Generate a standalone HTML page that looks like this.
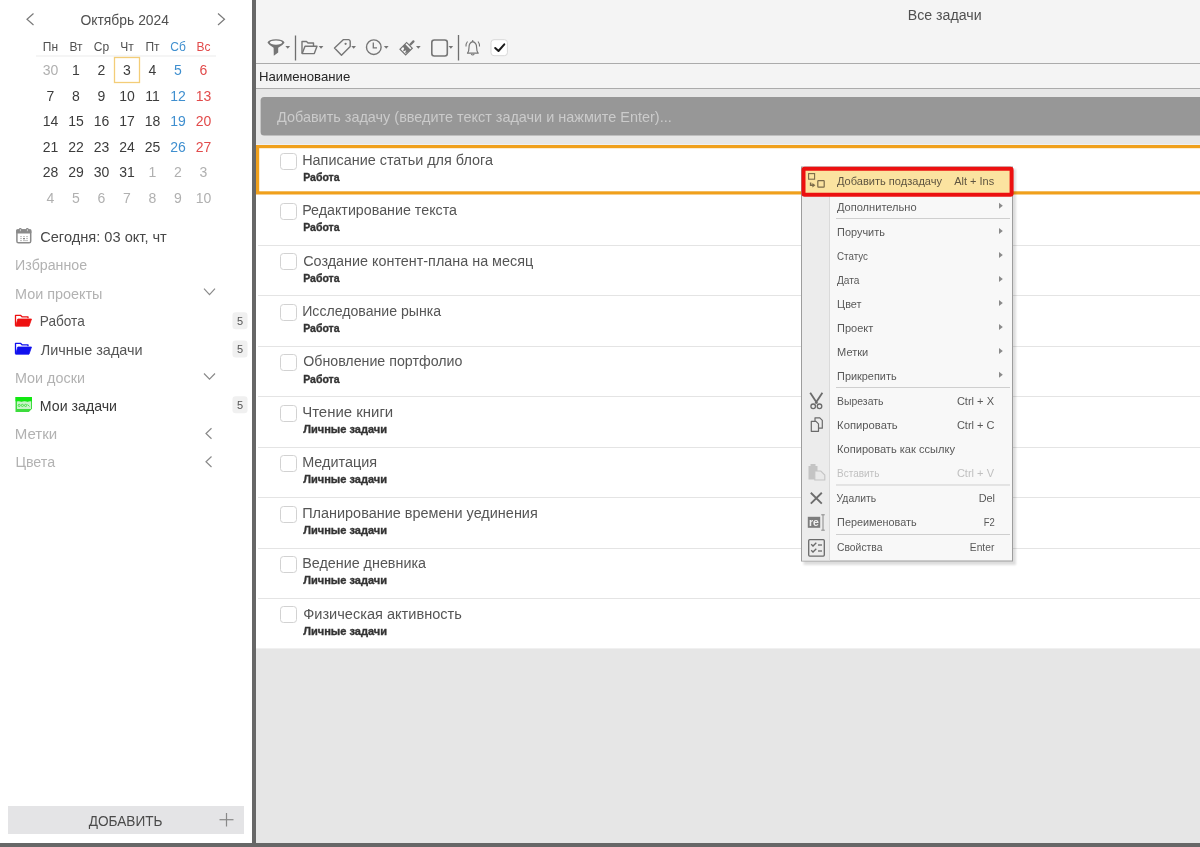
<!DOCTYPE html>
<html lang="ru"><head><meta charset="utf-8"><title>Все задачи</title>
<style>
html,body{margin:0;padding:0;width:1200px;height:847px;overflow:hidden;background:#fff}
svg{display:block;font-family:"Liberation Sans", sans-serif;will-change:transform}
</style></head><body>
<svg width="1200" height="847" viewBox="0 0 1200 847">
<defs><filter id="blur" x="-5%" y="-5%" width="110%" height="110%"><feGaussianBlur stdDeviation="1.3"/></filter></defs>
<rect x="0" y="0" width="252" height="847" fill="#ffffff" stroke="none" stroke-width="1" rx="0"/>
<rect x="256" y="0" width="944" height="88" fill="#f4f4f4" stroke="none" stroke-width="1" rx="0"/>
<line x1="256" y1="63.5" x2="1200" y2="63.5" stroke="#ababab" stroke-width="1"/>
<line x1="256" y1="88.5" x2="1200" y2="88.5" stroke="#ababab" stroke-width="1"/>
<rect x="256" y="89" width="944" height="56" fill="#e7e7e7" stroke="none" stroke-width="1" rx="0"/>
<rect x="260.6" y="97" width="960" height="38.6" fill="#979797" stroke="none" stroke-width="1" rx="3.5"/>
<text x="277.0" y="122" font-size="14.4" fill="#cbcbcb" font-weight="400" text-anchor="start" textLength="394.7" lengthAdjust="spacingAndGlyphs">Добавить задачу (введите текст задачи и нажмите Enter)...</text>
<rect x="256" y="648" width="944" height="195" fill="#e6e6e6" stroke="none" stroke-width="1" rx="0"/>
<rect x="252" y="0" width="4" height="847" fill="#676767" stroke="none" stroke-width="1" rx="0"/>
<rect x="0" y="843" width="1200" height="4" fill="#676767" stroke="none" stroke-width="1" rx="0"/>
<path d="M33.5 13.5 L27 19.2 L33.5 25" fill="none" stroke="#7a7a7a" stroke-width="1.2"/>
<path d="M218 13.5 L224.5 19.2 L218 25" fill="none" stroke="#7a7a7a" stroke-width="1.2"/>
<text x="80.4" y="25" font-size="14" fill="#505050" font-weight="400" text-anchor="start" textLength="88.69" lengthAdjust="spacingAndGlyphs">Октябрь 2024</text>
<text x="50.5" y="51" font-size="12" fill="#505050" font-weight="400" text-anchor="middle">Пн</text>
<text x="76.0" y="51" font-size="12" fill="#505050" font-weight="400" text-anchor="middle">Вт</text>
<text x="101.5" y="51" font-size="12" fill="#505050" font-weight="400" text-anchor="middle">Ср</text>
<text x="127.0" y="51" font-size="12" fill="#505050" font-weight="400" text-anchor="middle">Чт</text>
<text x="152.5" y="51" font-size="12" fill="#505050" font-weight="400" text-anchor="middle">Пт</text>
<text x="178.0" y="51" font-size="12" fill="#3f8fcf" font-weight="400" text-anchor="middle">Сб</text>
<text x="203.5" y="51" font-size="12" fill="#e24b4b" font-weight="400" text-anchor="middle">Вс</text>
<line x1="36" y1="56" x2="216" y2="56" stroke="#ececec" stroke-width="1.2"/>
<rect x="114.5" y="57.5" width="25" height="25" fill="none" stroke="#f3cd78" stroke-width="1.3" rx="0"/>
<text x="50.5" y="75.0" font-size="14" fill="#b0b0b0" font-weight="400" text-anchor="middle">30</text>
<text x="76.0" y="75.0" font-size="14" fill="#3c3c3c" font-weight="400" text-anchor="middle">1</text>
<text x="101.5" y="75.0" font-size="14" fill="#3c3c3c" font-weight="400" text-anchor="middle">2</text>
<text x="127.0" y="75.0" font-size="14" fill="#3c3c3c" font-weight="400" text-anchor="middle">3</text>
<text x="152.5" y="75.0" font-size="14" fill="#3c3c3c" font-weight="400" text-anchor="middle">4</text>
<text x="178.0" y="75.0" font-size="14" fill="#3f8fcf" font-weight="400" text-anchor="middle">5</text>
<text x="203.5" y="75.0" font-size="14" fill="#e24b4b" font-weight="400" text-anchor="middle">6</text>
<text x="50.5" y="100.6" font-size="14" fill="#3c3c3c" font-weight="400" text-anchor="middle">7</text>
<text x="76.0" y="100.6" font-size="14" fill="#3c3c3c" font-weight="400" text-anchor="middle">8</text>
<text x="101.5" y="100.6" font-size="14" fill="#3c3c3c" font-weight="400" text-anchor="middle">9</text>
<text x="127.0" y="100.6" font-size="14" fill="#3c3c3c" font-weight="400" text-anchor="middle">10</text>
<text x="152.5" y="100.6" font-size="14" fill="#3c3c3c" font-weight="400" text-anchor="middle">11</text>
<text x="178.0" y="100.6" font-size="14" fill="#3f8fcf" font-weight="400" text-anchor="middle">12</text>
<text x="203.5" y="100.6" font-size="14" fill="#e24b4b" font-weight="400" text-anchor="middle">13</text>
<text x="50.5" y="126.2" font-size="14" fill="#3c3c3c" font-weight="400" text-anchor="middle">14</text>
<text x="76.0" y="126.2" font-size="14" fill="#3c3c3c" font-weight="400" text-anchor="middle">15</text>
<text x="101.5" y="126.2" font-size="14" fill="#3c3c3c" font-weight="400" text-anchor="middle">16</text>
<text x="127.0" y="126.2" font-size="14" fill="#3c3c3c" font-weight="400" text-anchor="middle">17</text>
<text x="152.5" y="126.2" font-size="14" fill="#3c3c3c" font-weight="400" text-anchor="middle">18</text>
<text x="178.0" y="126.2" font-size="14" fill="#3f8fcf" font-weight="400" text-anchor="middle">19</text>
<text x="203.5" y="126.2" font-size="14" fill="#e24b4b" font-weight="400" text-anchor="middle">20</text>
<text x="50.5" y="151.8" font-size="14" fill="#3c3c3c" font-weight="400" text-anchor="middle">21</text>
<text x="76.0" y="151.8" font-size="14" fill="#3c3c3c" font-weight="400" text-anchor="middle">22</text>
<text x="101.5" y="151.8" font-size="14" fill="#3c3c3c" font-weight="400" text-anchor="middle">23</text>
<text x="127.0" y="151.8" font-size="14" fill="#3c3c3c" font-weight="400" text-anchor="middle">24</text>
<text x="152.5" y="151.8" font-size="14" fill="#3c3c3c" font-weight="400" text-anchor="middle">25</text>
<text x="178.0" y="151.8" font-size="14" fill="#3f8fcf" font-weight="400" text-anchor="middle">26</text>
<text x="203.5" y="151.8" font-size="14" fill="#e24b4b" font-weight="400" text-anchor="middle">27</text>
<text x="50.5" y="177.4" font-size="14" fill="#3c3c3c" font-weight="400" text-anchor="middle">28</text>
<text x="76.0" y="177.4" font-size="14" fill="#3c3c3c" font-weight="400" text-anchor="middle">29</text>
<text x="101.5" y="177.4" font-size="14" fill="#3c3c3c" font-weight="400" text-anchor="middle">30</text>
<text x="127.0" y="177.4" font-size="14" fill="#3c3c3c" font-weight="400" text-anchor="middle">31</text>
<text x="152.5" y="177.4" font-size="14" fill="#b0b0b0" font-weight="400" text-anchor="middle">1</text>
<text x="178.0" y="177.4" font-size="14" fill="#b0b0b0" font-weight="400" text-anchor="middle">2</text>
<text x="203.5" y="177.4" font-size="14" fill="#b0b0b0" font-weight="400" text-anchor="middle">3</text>
<text x="50.5" y="203.0" font-size="14" fill="#b0b0b0" font-weight="400" text-anchor="middle">4</text>
<text x="76.0" y="203.0" font-size="14" fill="#b0b0b0" font-weight="400" text-anchor="middle">5</text>
<text x="101.5" y="203.0" font-size="14" fill="#b0b0b0" font-weight="400" text-anchor="middle">6</text>
<text x="127.0" y="203.0" font-size="14" fill="#b0b0b0" font-weight="400" text-anchor="middle">7</text>
<text x="152.5" y="203.0" font-size="14" fill="#b0b0b0" font-weight="400" text-anchor="middle">8</text>
<text x="178.0" y="203.0" font-size="14" fill="#b0b0b0" font-weight="400" text-anchor="middle">9</text>
<text x="203.5" y="203.0" font-size="14" fill="#b0b0b0" font-weight="400" text-anchor="middle">10</text>
<rect x="16.9" y="229.9" width="13.8" height="12.9" rx="1.6" fill="#fff" stroke="#8a8a8a" stroke-width="1.5"/><rect x="16.2" y="229.2" width="15.2" height="4.3" rx="1.2" fill="#8a8a8a"/><rect x="19" y="228" width="2.6" height="3.6" rx="1" fill="#8a8a8a"/><rect x="26" y="228" width="2.6" height="3.6" rx="1" fill="#8a8a8a"/><rect x="19.9" y="229.2" width="0.9" height="2" fill="#d8d8d8"/><rect x="26.9" y="229.2" width="0.9" height="2" fill="#d8d8d8"/><g fill="#b8b8b8"><rect x="20" y="236.2" width="2" height="0.9"/><rect x="23" y="236.2" width="2" height="0.9"/><rect x="26" y="236.2" width="2" height="0.9"/><rect x="20" y="238.2" width="2" height="0.9"/><rect x="23" y="238" width="2" height="1.3" fill="#888"/><rect x="26" y="238.2" width="2" height="0.9"/><rect x="20" y="240.2" width="2" height="0.9"/><rect x="23" y="240.2" width="5" height="0.9"/></g>
<text x="40.2" y="242" font-size="14.4" fill="#484848" font-weight="400" text-anchor="start" textLength="126.63" lengthAdjust="spacingAndGlyphs">Сегодня: 03 окт, чт</text>
<text x="15.1" y="270" font-size="14.25" fill="#b2b2b2" font-weight="400" text-anchor="start" textLength="72.02" lengthAdjust="spacingAndGlyphs">Избранное</text>
<text x="14.99" y="298.6" font-size="14.25" fill="#b2b2b2" font-weight="400" text-anchor="start" textLength="87.46" lengthAdjust="spacingAndGlyphs">Мои проекты</text>
<path d="M204 288.7 L209.5 294.6 L215 288.7" fill="none" stroke="#8a8a8a" stroke-width="1.2"/>
<path d="M15.5 325.8 L15.5 315.3 L20.5 315.3 L22 316.8 L28 316.8 L28 318.3" fill="none" stroke="#ee1010" stroke-width="1.3" stroke-linejoin="round"/>
<path d="M17.8 319.0 L31.5 319.0 L29 326.2 L15.6 326.2 Z" fill="#ee1010" stroke="#ee1010" stroke-width="0.8" stroke-linejoin="round"/>
<text x="39.85" y="326.3" font-size="14.4" fill="#555" font-weight="400" text-anchor="start" textLength="44.95" lengthAdjust="spacingAndGlyphs">Работа</text>
<path d="M15.5 353.8 L15.5 343.3 L20.5 343.3 L22 344.8 L28 344.8 L28 346.3" fill="none" stroke="#1010ee" stroke-width="1.3" stroke-linejoin="round"/>
<path d="M17.8 347.0 L31.5 347.0 L29 354.2 L15.6 354.2 Z" fill="#1010ee" stroke="#1010ee" stroke-width="0.8" stroke-linejoin="round"/>
<text x="40.8" y="354.6" font-size="14.4" fill="#555" font-weight="400" text-anchor="start" textLength="101.84" lengthAdjust="spacingAndGlyphs">Личные задачи</text>
<rect x="232.5" y="312.2" width="15" height="17" fill="#f0f0f0" stroke="none" stroke-width="1" rx="3"/>
<text x="240" y="324.5" font-size="11" fill="#555" font-weight="400" text-anchor="middle">5</text>
<rect x="232.5" y="340.4" width="15" height="17" fill="#f0f0f0" stroke="none" stroke-width="1" rx="3"/>
<text x="240" y="352.7" font-size="11" fill="#555" font-weight="400" text-anchor="middle">5</text>
<text x="14.99" y="382.7" font-size="14.25" fill="#b2b2b2" font-weight="400" text-anchor="start" textLength="69.98" lengthAdjust="spacingAndGlyphs">Мои доски</text>
<path d="M204 373.5 L209.5 379.2 L215 373.5" fill="none" stroke="#8a8a8a" stroke-width="1.2"/>
<path d="M15.5 397 L32 397 L32 408.8 L28.8 412 L15.5 412 Z" fill="#3ddc3d"/><rect x="15.5" y="397" width="16.5" height="4.2" fill="#12e812"/><path d="M17 401.6 Q18.5 400.8 20 401.6 T23 401.6 T26 401.6 T29 401.6 T31 401.6 L31 409 L17 409 Z" fill="#c9f3c9"/><g fill="none" stroke="#3ddc3d" stroke-width="0.9"><circle cx="19.2" cy="405.4" r="1.1"/><circle cx="22.4" cy="405.4" r="1.1"/><circle cx="25.6" cy="405.4" r="1.1"/><path d="M27.5 404.5 L29.5 406.5"/></g>
<text x="39.82" y="410.7" font-size="14.4" fill="#383838" font-weight="400" text-anchor="start" textLength="77.22" lengthAdjust="spacingAndGlyphs">Мои задачи</text>
<rect x="232.5" y="396.2" width="15" height="17" fill="#f0f0f0" stroke="none" stroke-width="1" rx="3"/>
<text x="240" y="408.5" font-size="11" fill="#555" font-weight="400" text-anchor="middle">5</text>
<text x="14.74" y="439.4" font-size="14.25" fill="#b2b2b2" font-weight="400" text-anchor="start" textLength="42.47" lengthAdjust="spacingAndGlyphs">Метки</text>
<path d="M211.5 428.2 L206 433.5 L211.5 438.8" fill="none" stroke="#8a8a8a" stroke-width="1.2"/>
<text x="15.4" y="467.2" font-size="14.25" fill="#b2b2b2" font-weight="400" text-anchor="start" textLength="39.73" lengthAdjust="spacingAndGlyphs">Цвета</text>
<path d="M211.5 456.5 L206 461.8 L211.5 467" fill="none" stroke="#8a8a8a" stroke-width="1.2"/>
<rect x="8" y="806" width="236" height="28" fill="#e4e4e6" stroke="none" stroke-width="1" rx="0"/>
<text x="88.7" y="825.8" font-size="14.5" fill="#4a4a4a" font-weight="400" text-anchor="start" textLength="73.79" lengthAdjust="spacingAndGlyphs">ДОБАВИТЬ</text>
<line x1="219.5" y1="819.7" x2="233.5" y2="819.7" stroke="#888" stroke-width="1.2"/>
<line x1="226.5" y1="813" x2="226.5" y2="826.5" stroke="#888" stroke-width="1.2"/>
<text x="907.74" y="20.4" font-size="14" fill="#505050" font-weight="400" text-anchor="start" textLength="73.89" lengthAdjust="spacingAndGlyphs">Все задачи</text>
<path d="M267.5 42.8 A8.5 3.6 0 0 1 284.5 42.8 Q283 45.2 278.2 47.8 L278.2 52.4 L273.8 55.7 L273.6 47.8 Q269 45.2 267.5 42.8 Z" fill="#757575" stroke="none" stroke-width="1"/>
<ellipse cx="276" cy="42.6" rx="6.2" ry="2.1" fill="#f9f9f9"/>
<path d="M285.4 46.0 L290.09999999999997 46.0 L287.75 48.7 Z" fill="#757575" stroke="none" stroke-width="1"/>
<line x1="295.5" y1="35.5" x2="295.5" y2="60.5" stroke="#6f6f6f" stroke-width="1.3"/>
<path d="M302 53.5 L302 41.5 L306.5 41.5 L308 43 L313.5 43 L313.5 46" fill="none" stroke="#757575" stroke-width="1.4" stroke-linejoin="round"/>
<path d="M302.2 53.6 L305 46.3 L317 46.3 L314.3 53.6 Z" fill="none" stroke="#757575" stroke-width="1.4" stroke-linejoin="round"/>
<path d="M318.7 46.0 L323.4 46.0 L321.05 48.7 Z" fill="#757575" stroke="none" stroke-width="1"/>
<path d="M334.5 48 L343.5 39.6 L348.8 39.6 Q350.2 40 350.2 41.5 L350.2 46.5 L341.5 55.3 Z" fill="none" stroke="#757575" stroke-width="1.4" stroke-linejoin="round"/>
<circle cx="345.6" cy="43.8" r="1.1" fill="#757575"/>
<path d="M351.3 46.0 L356.0 46.0 L353.65000000000003 48.7 Z" fill="#757575" stroke="none" stroke-width="1"/>
<circle cx="373.8" cy="47.2" r="7.3" fill="none" stroke="#757575" stroke-width="1.4"/>
<path d="M373.3 42.6 L373.3 47.9 L377 47.9" fill="none" stroke="#757575" stroke-width="1.3"/>
<path d="M383.9 46.0 L388.59999999999997 46.0 L386.25 48.7 Z" fill="#757575" stroke="none" stroke-width="1"/>
<g transform="translate(406.2 48.6) rotate(45)"><rect x="-1.1" y="-11.3" width="2.3" height="6.5" rx="1.1" fill="#757575"/><rect x="-4" y="-4.6" width="8" height="9.4" fill="#fafafa" stroke="#757575" stroke-width="1.2"/><path d="M-4 -2.4 L4 -2.4 L4 0.8 L2.6 4.4 L1.2 1.2 L-0.3 4.4 L-1.6 1.2 L-4 1.2 Z" fill="#757575"/></g>
<path d="M416.0 46.0 L420.7 46.0 L418.35 48.7 Z" fill="#757575" stroke="none" stroke-width="1"/>
<rect x="431.8" y="40" width="15.5" height="16" fill="none" stroke="#757575" stroke-width="1.6" rx="2.5"/>
<path d="M448.5 46.0 L453.2 46.0 L450.85 48.7 Z" fill="#757575" stroke="none" stroke-width="1"/>
<line x1="458.5" y1="35" x2="458.5" y2="60.5" stroke="#6f6f6f" stroke-width="1.3"/>
<path d="M467.5 53.2 Q469 51.5 469 47.5 Q469 42.5 472.7 41.6 Q476.6 42.5 476.6 47.5 Q476.6 51.5 478.2 53.2 Z" fill="none" stroke="#757575" stroke-width="1.2" stroke-linejoin="round"/>
<path d="M471.2 54 Q472.7 56 474.3 54" fill="none" stroke="#757575" stroke-width="1.1"/>
<line x1="472.7" y1="40" x2="472.7" y2="41.6" stroke="#757575" stroke-width="1.1"/>
<path d="M467.5 41.5 Q465.8 43.5 466 46.5" fill="none" stroke="#757575" stroke-width="1.1"/>
<path d="M478 41.5 Q479.7 43.5 479.5 46.5" fill="none" stroke="#757575" stroke-width="1.1"/>
<rect x="491" y="39.7" width="16.4" height="16" fill="#ffffff" stroke="#d8d8d8" stroke-width="1" rx="3"/>
<path d="M495.2 48 L498.5 51 L504.3 44.3" fill="none" stroke="#1a1a1a" stroke-width="2.0" stroke-linecap="round" stroke-linejoin="round"/>
<text x="258.99" y="81" font-size="13" fill="#262626" font-weight="400" text-anchor="start" textLength="91.25" lengthAdjust="spacingAndGlyphs">Наименование</text>
<rect x="256" y="144.6" width="944" height="503.8" fill="#ffffff" stroke="none" stroke-width="1" rx="0"/>
<rect x="280.5" y="153.5" width="16" height="16" fill="#fff" stroke="#d2d2d2" stroke-width="1" rx="3"/>
<text x="302.2" y="164.7" font-size="14.35" fill="#555" font-weight="400" text-anchor="start" textLength="190.78" lengthAdjust="spacingAndGlyphs">Написание статьи для блога</text>
<text x="303.2" y="180.89999999999998" font-size="10.5" fill="#333" font-weight="700" text-anchor="start" textLength="36.34" lengthAdjust="spacingAndGlyphs" stroke="#333" stroke-width="0.35">Работа</text>
<line x1="258" y1="245.5" x2="1200" y2="245.5" stroke="#e4e4e4" stroke-width="1"/>
<rect x="280.5" y="203.5" width="16" height="16" fill="#fff" stroke="#d2d2d2" stroke-width="1" rx="3"/>
<text x="302.21" y="215.13" font-size="14.35" fill="#555" font-weight="400" text-anchor="start" textLength="154.77" lengthAdjust="spacingAndGlyphs">Редактирование текста</text>
<text x="303.2" y="231.32999999999998" font-size="10.5" fill="#333" font-weight="700" text-anchor="start" textLength="36.34" lengthAdjust="spacingAndGlyphs" stroke="#333" stroke-width="0.35">Работа</text>
<line x1="258" y1="295.5" x2="1200" y2="295.5" stroke="#e4e4e4" stroke-width="1"/>
<rect x="280.5" y="253.5" width="16" height="16" fill="#fff" stroke="#d2d2d2" stroke-width="1" rx="3"/>
<text x="303.2" y="265.56" font-size="14.35" fill="#555" font-weight="400" text-anchor="start" textLength="230.02" lengthAdjust="spacingAndGlyphs">Создание контент-плана на месяц</text>
<text x="303.2" y="281.76" font-size="10.5" fill="#333" font-weight="700" text-anchor="start" textLength="36.34" lengthAdjust="spacingAndGlyphs" stroke="#333" stroke-width="0.35">Работа</text>
<line x1="258" y1="346.5" x2="1200" y2="346.5" stroke="#e4e4e4" stroke-width="1"/>
<rect x="280.5" y="304.5" width="16" height="16" fill="#fff" stroke="#d2d2d2" stroke-width="1" rx="3"/>
<text x="302.22" y="315.99" font-size="14.35" fill="#555" font-weight="400" text-anchor="start" textLength="138.86" lengthAdjust="spacingAndGlyphs">Исследование рынка</text>
<text x="303.2" y="332.19" font-size="10.5" fill="#333" font-weight="700" text-anchor="start" textLength="36.34" lengthAdjust="spacingAndGlyphs" stroke="#333" stroke-width="0.35">Работа</text>
<line x1="258" y1="396.5" x2="1200" y2="396.5" stroke="#e4e4e4" stroke-width="1"/>
<rect x="280.5" y="354.5" width="16" height="16" fill="#fff" stroke="#d2d2d2" stroke-width="1" rx="3"/>
<text x="303.2" y="366.42" font-size="14.35" fill="#555" font-weight="400" text-anchor="start" textLength="159.18" lengthAdjust="spacingAndGlyphs">Обновление портфолио</text>
<text x="303.2" y="382.62" font-size="10.5" fill="#333" font-weight="700" text-anchor="start" textLength="36.34" lengthAdjust="spacingAndGlyphs" stroke="#333" stroke-width="0.35">Работа</text>
<line x1="258" y1="447.5" x2="1200" y2="447.5" stroke="#e4e4e4" stroke-width="1"/>
<rect x="280.5" y="405.5" width="16" height="16" fill="#fff" stroke="#d2d2d2" stroke-width="1" rx="3"/>
<text x="302.16" y="416.85" font-size="14.35" fill="#555" font-weight="400" text-anchor="start" textLength="91.06" lengthAdjust="spacingAndGlyphs">Чтение книги</text>
<text x="303.2" y="433.05" font-size="10.5" fill="#333" font-weight="700" text-anchor="start" textLength="83.88" lengthAdjust="spacingAndGlyphs" stroke="#333" stroke-width="0.35">Личные задачи</text>
<line x1="258" y1="497.5" x2="1200" y2="497.5" stroke="#e4e4e4" stroke-width="1"/>
<rect x="280.5" y="455.5" width="16" height="16" fill="#fff" stroke="#d2d2d2" stroke-width="1" rx="3"/>
<text x="302.2" y="467.28" font-size="14.35" fill="#555" font-weight="400" text-anchor="start" textLength="74.88" lengthAdjust="spacingAndGlyphs">Медитация</text>
<text x="303.2" y="483.47999999999996" font-size="10.5" fill="#333" font-weight="700" text-anchor="start" textLength="83.88" lengthAdjust="spacingAndGlyphs" stroke="#333" stroke-width="0.35">Личные задачи</text>
<line x1="258" y1="548.5" x2="1200" y2="548.5" stroke="#e4e4e4" stroke-width="1"/>
<rect x="280.5" y="506.5" width="16" height="16" fill="#fff" stroke="#d2d2d2" stroke-width="1" rx="3"/>
<text x="302.19" y="517.71" font-size="14.35" fill="#555" font-weight="400" text-anchor="start" textLength="235.58" lengthAdjust="spacingAndGlyphs">Планирование времени уединения</text>
<text x="303.2" y="533.91" font-size="10.5" fill="#333" font-weight="700" text-anchor="start" textLength="83.88" lengthAdjust="spacingAndGlyphs" stroke="#333" stroke-width="0.35">Личные задачи</text>
<line x1="258" y1="598.5" x2="1200" y2="598.5" stroke="#e4e4e4" stroke-width="1"/>
<rect x="280.5" y="556.5" width="16" height="16" fill="#fff" stroke="#d2d2d2" stroke-width="1" rx="3"/>
<text x="302.2" y="568.14" font-size="14.35" fill="#555" font-weight="400" text-anchor="start" textLength="123.78" lengthAdjust="spacingAndGlyphs">Ведение дневника</text>
<text x="303.2" y="584.3399999999999" font-size="10.5" fill="#333" font-weight="700" text-anchor="start" textLength="83.88" lengthAdjust="spacingAndGlyphs" stroke="#333" stroke-width="0.35">Личные задачи</text>
<rect x="280.5" y="606.5" width="16" height="16" fill="#fff" stroke="#d2d2d2" stroke-width="1" rx="3"/>
<text x="303.2" y="618.57" font-size="14.35" fill="#555" font-weight="400" text-anchor="start" textLength="158.68" lengthAdjust="spacingAndGlyphs">Физическая активность</text>
<text x="303.2" y="634.77" font-size="10.5" fill="#333" font-weight="700" text-anchor="start" textLength="83.88" lengthAdjust="spacingAndGlyphs" stroke="#333" stroke-width="0.35">Личные задачи</text>
<rect x="257.6" y="146.6" width="960" height="46.3" fill="none" stroke="#f0a01c" stroke-width="3.2" rx="0"/>
<rect x="803.5" y="169" width="212.5" height="396" fill="#000" opacity="0.13" filter="url(#blur)"/>
<rect x="801.5" y="167" width="211.0" height="394" fill="#f8f8f8" stroke="#9d9d9d" stroke-width="1" rx="0"/>
<rect x="802.0" y="167.5" width="28" height="393" fill="#ececec" stroke="none" stroke-width="1" rx="0"/>
<line x1="829.5" y1="167" x2="829.5" y2="560.5" stroke="#dadada" stroke-width="1"/>
<rect x="803.5" y="168.7" width="208.1" height="26.1" fill="#fbe3a0" stroke="#ec1010" stroke-width="4" rx="1.2"/>
<line x1="836" y1="218.5" x2="1010" y2="218.5" stroke="#cfcfcf" stroke-width="1"/>
<line x1="836" y1="387.5" x2="1010" y2="387.5" stroke="#cfcfcf" stroke-width="1"/>
<line x1="836" y1="485" x2="1010" y2="485" stroke="#cfcfcf" stroke-width="1"/>
<line x1="836" y1="534.5" x2="1010" y2="534.5" stroke="#cfcfcf" stroke-width="1"/>
<text x="836.9" y="185.1" font-size="11.1" fill="#5e5440" font-weight="400" text-anchor="start" textLength="105.15" lengthAdjust="spacingAndGlyphs">Добавить подзадачу</text>
<text x="954.2" y="185.1" font-size="11.1" fill="#5e5440" font-weight="400" text-anchor="start" textLength="39.95" lengthAdjust="spacingAndGlyphs">Alt + Ins</text>
<text x="836.9" y="210.7" font-size="11.1" fill="#585858" font-weight="400" text-anchor="start" textLength="79.77" lengthAdjust="spacingAndGlyphs">Дополнительно</text>
<path d="M999 202.7 L1002.8 205.7 L999 208.7 Z" fill="#8a8a8a" stroke="none" stroke-width="1"/>
<text x="837.1" y="236" font-size="11.1" fill="#585858" font-weight="400" text-anchor="start" textLength="47.78" lengthAdjust="spacingAndGlyphs">Поручить</text>
<path d="M999 228 L1002.8 231 L999 234 Z" fill="#8a8a8a" stroke="none" stroke-width="1"/>
<text x="837.0" y="260" font-size="11.1" fill="#585858" font-weight="400" text-anchor="start" textLength="30.9" lengthAdjust="spacingAndGlyphs">Статус</text>
<path d="M999 252 L1002.8 255 L999 258 Z" fill="#8a8a8a" stroke="none" stroke-width="1"/>
<text x="836.9" y="284" font-size="11.1" fill="#585858" font-weight="400" text-anchor="start" textLength="22.54" lengthAdjust="spacingAndGlyphs">Дата</text>
<path d="M999 276 L1002.8 279 L999 282 Z" fill="#8a8a8a" stroke="none" stroke-width="1"/>
<text x="837.1" y="308" font-size="11.1" fill="#585858" font-weight="400" text-anchor="start" textLength="24.38" lengthAdjust="spacingAndGlyphs">Цвет</text>
<path d="M999 300 L1002.8 303 L999 306 Z" fill="#8a8a8a" stroke="none" stroke-width="1"/>
<text x="837.1" y="332" font-size="11.1" fill="#585858" font-weight="400" text-anchor="start" textLength="36.18" lengthAdjust="spacingAndGlyphs">Проект</text>
<path d="M999 324 L1002.8 327 L999 330 Z" fill="#8a8a8a" stroke="none" stroke-width="1"/>
<text x="837.1" y="356" font-size="11.1" fill="#585858" font-weight="400" text-anchor="start" textLength="31.2" lengthAdjust="spacingAndGlyphs">Метки</text>
<path d="M999 348 L1002.8 351 L999 354 Z" fill="#8a8a8a" stroke="none" stroke-width="1"/>
<text x="837.1" y="379.8" font-size="11.1" fill="#585858" font-weight="400" text-anchor="start" textLength="59.48" lengthAdjust="spacingAndGlyphs">Прикрепить</text>
<path d="M999 371.8 L1002.8 374.8 L999 377.8 Z" fill="#8a8a8a" stroke="none" stroke-width="1"/>
<text x="837.1" y="404.6" font-size="11.1" fill="#585858" font-weight="400" text-anchor="start" textLength="46.29" lengthAdjust="spacingAndGlyphs">Вырезать</text>
<text x="956.9" y="404.6" font-size="11.1" fill="#585858" font-weight="400" text-anchor="start" textLength="37.1" lengthAdjust="spacingAndGlyphs">Ctrl + X</text>
<text x="837.1" y="428.6" font-size="11.1" fill="#585858" font-weight="400" text-anchor="start" textLength="60.58" lengthAdjust="spacingAndGlyphs">Копировать</text>
<text x="956.9" y="428.6" font-size="11.1" fill="#585858" font-weight="400" text-anchor="start" textLength="37.71" lengthAdjust="spacingAndGlyphs">Ctrl + C</text>
<text x="837.1" y="452.5" font-size="11.1" fill="#585858" font-weight="400" text-anchor="start" textLength="117.85" lengthAdjust="spacingAndGlyphs">Копировать как ссылку</text>
<text x="837.1" y="476.5" font-size="11.1" fill="#c0c0c0" font-weight="400" text-anchor="start" textLength="42.3" lengthAdjust="spacingAndGlyphs">Вставить</text>
<text x="956.9" y="476.5" font-size="11.1" fill="#c0c0c0" font-weight="400" text-anchor="start" textLength="37.1" lengthAdjust="spacingAndGlyphs">Ctrl + V</text>
<text x="836.6" y="502.3" font-size="11.1" fill="#585858" font-weight="400" text-anchor="start" textLength="39.49" lengthAdjust="spacingAndGlyphs">Удалить</text>
<text x="978.7" y="502.3" font-size="11.1" fill="#585858" font-weight="400" text-anchor="start" textLength="16.36" lengthAdjust="spacingAndGlyphs">Del</text>
<text x="837.1" y="526.4" font-size="11.1" fill="#585858" font-weight="400" text-anchor="start" textLength="79.58" lengthAdjust="spacingAndGlyphs">Переименовать</text>
<text x="983.7" y="526.4" font-size="11.1" fill="#585858" font-weight="400" text-anchor="start" textLength="11.04" lengthAdjust="spacingAndGlyphs">F2</text>
<text x="837.0" y="551.2" font-size="11.1" fill="#585858" font-weight="400" text-anchor="start" textLength="45.43" lengthAdjust="spacingAndGlyphs">Свойства</text>
<text x="969.8" y="551.2" font-size="11.1" fill="#585858" font-weight="400" text-anchor="start" textLength="24.52" lengthAdjust="spacingAndGlyphs">Enter</text>
<rect x="808.6" y="173.6" width="6" height="5.6" fill="none" stroke="#7a6a48" stroke-width="1.1" rx="0"/>
<rect x="817.8" y="180.7" width="6.4" height="6.4" fill="none" stroke="#7a6a48" stroke-width="1.2" rx="0.6"/>
<path d="M810.6 182.6 L810.6 185.2 L813 185.2" fill="none" stroke="#7a6a48" stroke-width="1.5"/>
<path d="M812.4 183 L815.4 185.2 L812.4 187.4 Z" fill="#7a6a48" stroke="none" stroke-width="1"/>
<path d="M810.2 392.8 L817.3 403.6" fill="none" stroke="#6a6a6a" stroke-width="1.8"/>
<path d="M822.4 392.8 L815.3 403.6" fill="none" stroke="#6a6a6a" stroke-width="1.8"/>
<circle cx="813.2" cy="406.3" r="2.3" fill="none" stroke="#6a6a6a" stroke-width="1.3"/>
<circle cx="819.5" cy="406.3" r="2.3" fill="none" stroke="#6a6a6a" stroke-width="1.3"/>
<path d="M815 421 L815 417.8 L819.8 417.8 L822.3 420.3 L822.3 428.2 L818.5 428.2" fill="none" stroke="#6a6a6a" stroke-width="1.2" stroke-linejoin="round"/>
<path d="M811.3 421.3 L816 421.3 L818.5 423.8 L818.5 431.3 L811.3 431.3 Z" fill="none" stroke="#6a6a6a" stroke-width="1.2" stroke-linejoin="round"/>
<rect x="808.5" y="466" width="9" height="13.5" fill="#c4c4c4" stroke="none" stroke-width="1" rx="0"/>
<rect x="810.5" y="464" width="5" height="3" fill="#c4c4c4" stroke="none" stroke-width="1" rx="0"/>
<path d="M814.8 471 L820.8 471 L824.8 475 L824.8 480 L814.8 480 Z" fill="#e9e9e9" stroke="#c4c4c4" stroke-width="1.1"/>
<path d="M810.8 492.8 L821.8 503.6 M821.8 492.8 L810.8 503.6" fill="none" stroke="#6d6d6d" stroke-width="1.9"/>
<rect x="807.8" y="516.8" width="12.4" height="11" fill="#7c7c7c" stroke="none" stroke-width="1" rx="0"/>
<text x="814" y="526.4" font-size="10.5" fill="#f0f0f0" font-weight="700" text-anchor="middle">re</text>
<path d="M821.2 514.8 L824.8 514.8 M823 514.8 L823 530.2 M821.2 530.2 L824.8 530.2" fill="none" stroke="#808080" stroke-width="0.9"/>
<rect x="808.7" y="539.7" width="15.6" height="16.4" fill="none" stroke="#6a6a6a" stroke-width="1.3" rx="1"/>
<path d="M811.2 544.3 L813 546 L816.3 542.7 M811.2 550.3 L813 552 L816.3 548.7" fill="none" stroke="#6a6a6a" stroke-width="1.3"/>
<line x1="818" y1="545" x2="822" y2="545" stroke="#6a6a6a" stroke-width="1.3"/>
<line x1="818" y1="551" x2="822" y2="551" stroke="#6a6a6a" stroke-width="1.3"/>
</svg>
</body></html>
